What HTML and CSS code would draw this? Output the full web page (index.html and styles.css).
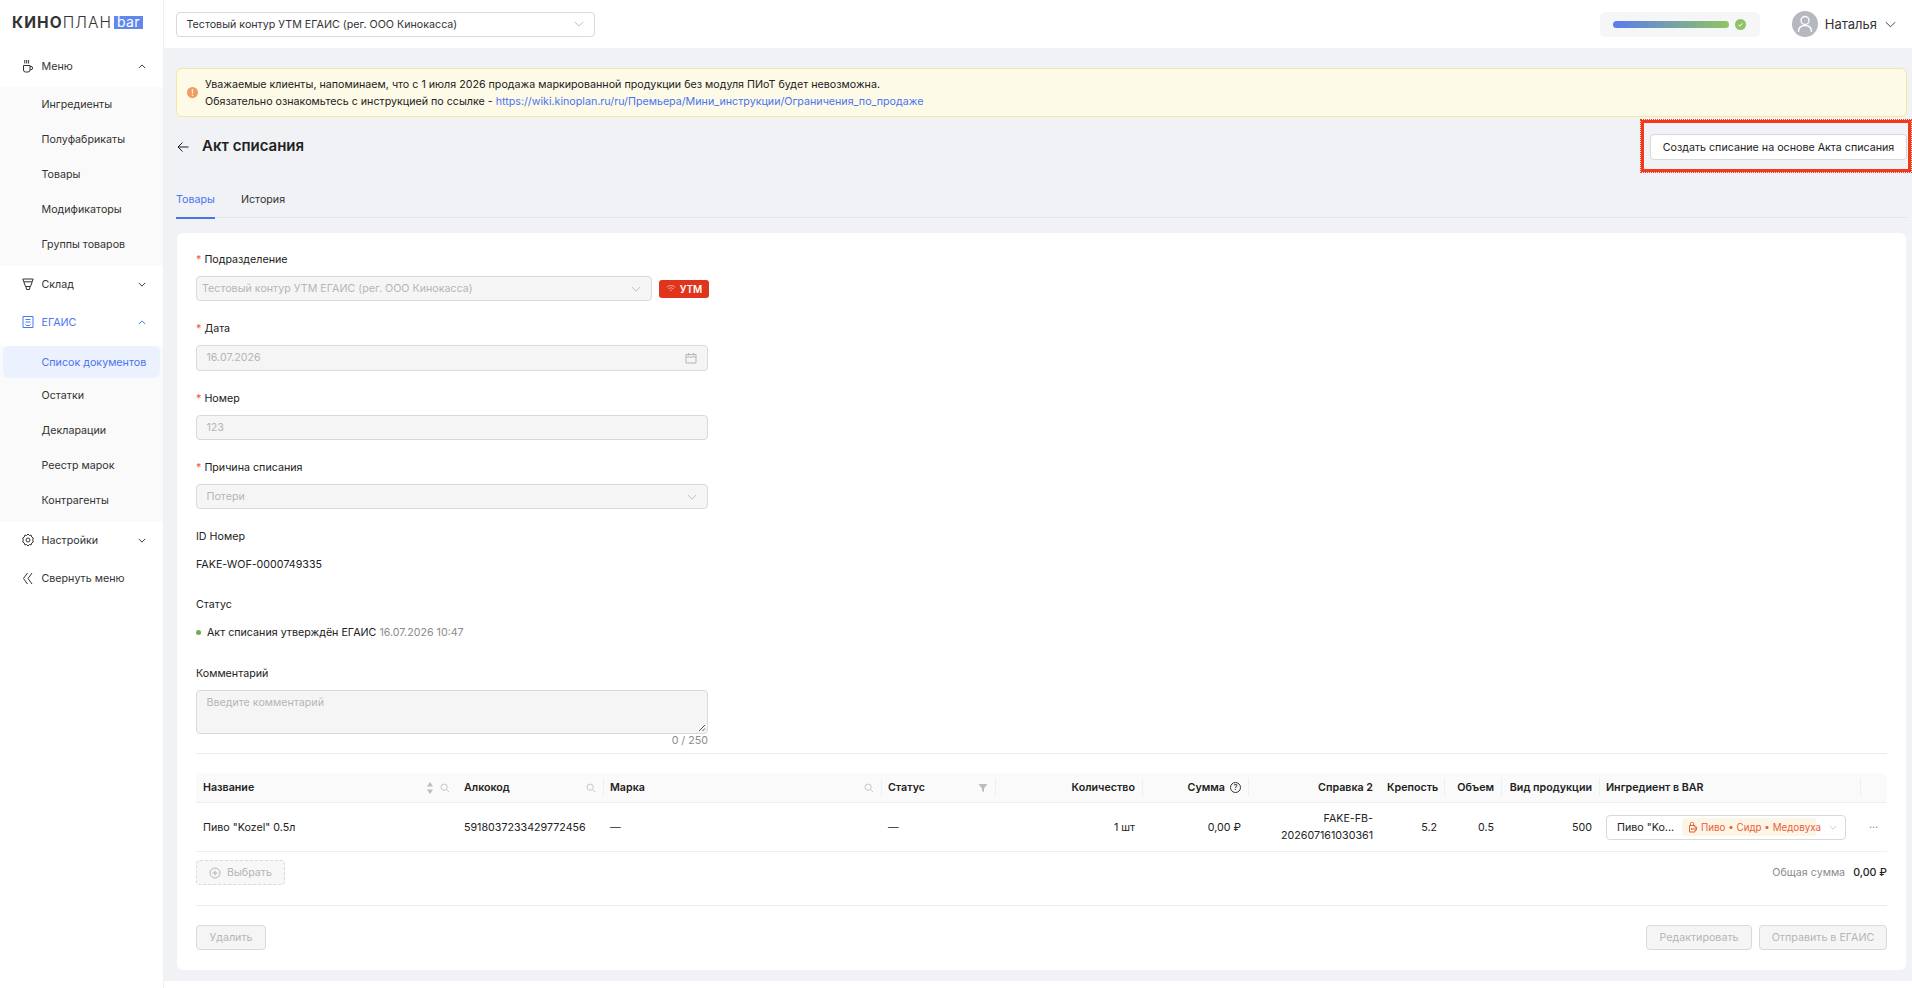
FILE: index.html
```html
<!DOCTYPE html>
<html lang="ru">
<head>
    <meta charset="UTF-8">
    <title>Акт списания</title>
    <link rel="stylesheet" href="styles.css">
</head>
<body>
<div class="app">
    <aside class="sidebar">
        <div class="logo"><span class="logo-bold">КИНО</span><span class="logo-light">ПЛАН</span><span class="logo-bar">bar</span></div>
        <div class="menu-head first">
            <svg class="menu-icon" viewBox="0 0 12 14"><path d="M1.500 6.500h6.500v4.500a2 2 0 0 1-2 2H3.500a2 2 0 0 1-2-2zM8 7.500h1a1.500 1.500 0 0 1 0 3.200H8M2.800 1v3.500M4.700 1v3.500M6.600 1v3.500"/></svg>
            <span class="menu-title">Меню</span>
            <svg class="menu-arrow" viewBox="0 0 10 6"><path d="M1 5l4-4 4 4"/></svg>
        </div>
        <div class="submenu">
            <a>Ингредиенты</a>
            <a>Полуфабрикаты</a>
            <a>Товары</a>
            <a>Модификаторы</a>
            <a>Группы товаров</a>
        </div>
        <div class="menu-head">
            <svg class="menu-icon" viewBox="0 0 12 14"><path d="M.8 2h10.400L8.500 9.500h-5zM2 4.800h8M4 9.500l.5 3h3l.5-3"/></svg>
            <span class="menu-title">Склад</span>
            <svg class="menu-arrow" viewBox="0 0 10 6"><path d="M1 1l4 4 4-4"/></svg>
        </div>
        <div class="menu-head active">
            <svg class="menu-icon" viewBox="0 0 12 14"><path d="M1 1.500h10v11H1zM3.500 4.500h5M3.500 7h5M3.500 9.500l1 1h3l1-1"/></svg>
            <span class="menu-title">ЕГАИС</span>
            <svg class="menu-arrow" viewBox="0 0 10 6"><path d="M1 5l4-4 4 4"/></svg>
        </div>
        <div class="submenu">
            <a class="current">Список документов</a>
            <a>Остатки</a>
            <a>Декларации</a>
            <a>Реестр марок</a>
            <a>Контрагенты</a>
        </div>
        <div class="menu-head">
            <svg class="menu-icon" viewBox="0 0 12 14"><path d="M6 1l1.300 1.400 1.900-.2.500 1.800 1.600 1-.6 2 .6 2-1.600 1-.5 1.800-1.900-.2L6 13l-1.300-1.400-1.900.2-.5-1.800-1.600-1 .6-2-.6-2 1.600-1 .5-1.800 1.900.2z"/><circle cx="6" cy="7" r="2"/></svg>
            <span class="menu-title">Настройки</span>
            <svg class="menu-arrow" viewBox="0 0 10 6"><path d="M1 1l4 4 4-4"/></svg>
        </div>
        <div class="menu-head collapse">
            <svg class="menu-icon" viewBox="0 0 12 14"><path d="M5.500 2L1.500 7.500l4 5.500M10 2L6 7.500l4 5.500"/></svg>
            <span class="menu-title">Свернуть меню</span>
        </div>
    </aside>

    <main class="main">
        <header class="topbar">
            <div class="select top-select">
                <span class="select-text">Тестовый контур УТМ ЕГАИС (рег. ООО Кинокасса)</span>
                <svg class="select-arrow" viewBox="0 0 12 7"><path d="M1 1l5 5 5-5"/></svg>
            </div>
            <div class="status-pill">
                <span class="status-bar"></span>
                <span class="status-dot">
                    <svg viewBox="0 0 11 11"><path d="M3.500 5.800l1.500 1.400 2.500-3"/></svg>
                </span>
            </div>
            <div class="user">
                <span class="avatar">
                    <svg viewBox="0 0 26 26"><circle cx="13" cy="9.500" r="4"/><path d="M6.500 21c0-4.500 2.500-6.500 6.500-6.500s6.500 2 6.500 6.500"/></svg>
                </span>
                <span class="user-name">Наталья</span>
                <svg class="user-arrow" viewBox="0 0 12 7"><path d="M1 1l5 5 5-5"/></svg>
            </div>
        </header>

        <div class="content">
            <div class="notice">
                <span class="notice-icon">!</span>
                <div>
                    <div>Уважаемые клиенты, напоминаем, что с 1 июля 2026 продажа маркированной продукции без модуля ПИоТ будет невозможна.</div>
                    <div>Обязательно ознакомьтесь с инструкцией по ссылке - <a class="link">https://wiki.kinoplan.ru/ru/Премьера/Мини_инструкции/Ограничения_по_продаже</a></div>
                </div>
            </div>

            <div class="page-head">
                <svg class="back" viewBox="0 0 12 12"><path d="M11.500 6H1M5.500 1.500L1 6l4.500 4.500"/></svg>
                <h1>Акт списания</h1>
                <button class="btn create-btn">Создать списание на основе Акта списания</button>
                <span class="red-mark"></span>
            </div>

            <div class="tabs">
                <span class="tab active">Товары</span>
                <span class="tab">История</span>
            </div>

            <section class="card">
                <div class="field">
                    <div class="label req">Подразделение</div>
                    <div class="row-ctl">
                        <div class="select disabled unit-select">
                            <span class="select-text">Тестовый контур УТМ ЕГАИС (рег. ООО Кинокасса)</span>
                            <svg class="select-arrow" viewBox="0 0 12 7"><path d="M1 1l5 5 5-5"/></svg>
                        </div>
                        <span class="utm-badge">
                            <svg viewBox="0 0 12 10"><path d="M1 3.500a7 7 0 0 1 10 0M3 5.500a4.200 4.200 0 0 1 6 0M5 7.500a1.400 1.400 0 0 1 2 0"/></svg>
                            УТМ
                        </span>
                    </div>
                </div>
                <div class="field">
                    <div class="label req">Дата</div>
                    <div class="select disabled wide">
                        <span class="select-text">16.07.2026</span>
                        <svg class="cal" viewBox="0 0 12 12"><path d="M1 2.500h10v8.500H1zM1 5h10M3.500 1v2.500M8.500 1v2.500"/></svg>
                    </div>
                </div>
                <div class="field">
                    <div class="label req">Номер</div>
                    <div class="select disabled wide"><span class="select-text">123</span></div>
                </div>
                <div class="field">
                    <div class="label req">Причина списания</div>
                    <div class="select disabled wide">
                        <span class="select-text">Потери</span>
                        <svg class="select-arrow" viewBox="0 0 12 7"><path d="M1 1l5 5 5-5"/></svg>
                    </div>
                </div>
                <div class="field info">
                    <div class="label">ID Номер</div>
                    <div class="value">FAKE-WOF-0000749335</div>
                </div>
                <div class="field info">
                    <div class="label">Статус</div>
                    <div class="value"><span class="dot"></span>Акт списания утверждён ЕГАИС <span class="muted">16.07.2026 10:47</span></div>
                </div>
                <div class="comment">
                    <div class="label">Комментарий</div>
                    <div class="textarea">Введите комментарий
                        <svg class="grip" viewBox="0 0 8 8"><path d="M1 7l6-6M4.500 7L7 4.500"/></svg>
                    </div>
                    <div class="counter">0 / 250</div>
                </div>
                <hr class="divider">

                <table class="goods">
                    <colgroup>
                        <col class="c-name"><col class="c-code"><col class="c-mark"><col class="c-status"><col class="c-qty"><col class="c-sum"><col class="c-ref"><col class="c-str"><col class="c-vol"><col class="c-kind"><col class="c-ingr"><col>
                    </colgroup>
                    <thead>
                        <tr>
                            <th><div class="th-in">Название
                                <svg class="sort" viewBox="0 0 8 14"><path d="M4 1l3 4.500H1zM4 13l3-4.500H1z"/></svg>
                                <svg class="find" viewBox="0 0 12 12"><circle cx="5" cy="5" r="3.700"/><path d="M8 8l3 3"/></svg>
                            </div></th>
                            <th><div class="th-in">Алкокод
                                <svg class="find auto" viewBox="0 0 12 12"><circle cx="5" cy="5" r="3.700"/><path d="M8 8l3 3"/></svg>
                            </div></th>
                            <th class="sep"><div class="th-in">Марка
                                <svg class="find auto" viewBox="0 0 12 12"><circle cx="5" cy="5" r="3.700"/><path d="M8 8l3 3"/></svg>
                            </div></th>
                            <th class="sep"><div class="th-in">Статус
                                <svg class="funnel" viewBox="0 0 10 10"><path d="M.5 1h9L6 5.500V9L4 8V5.500z"/></svg>
                            </div></th>
                            <th class="num sep">Количество</th>
                            <th class="num sep"><div class="th-in end">Сумма <span class="help">?</span></div></th>
                            <th class="num sep">Справка 2</th>
                            <th class="num">Крепость</th>
                            <th class="num sep">Объем</th>
                            <th class="num sep">Вид продукции</th>
                            <th class="sep">Ингредиент в BAR</th>
                            <th class="sep"></th>
                        </tr>
                    </thead>
                    <tbody>
                        <tr>
                            <td>Пиво "Kozel" 0.5л</td>
                            <td>5918037233429772456</td>
                            <td>—</td>
                            <td>—</td>
                            <td class="num">1 шт</td>
                            <td class="num">0,00 ₽</td>
                            <td class="num ref">FAKE-FB-202607161030361</td>
                            <td class="num">5.2</td>
                            <td class="num">0.5</td>
                            <td class="num">500</td>
                            <td>
                                <div class="select ingr-select">
                                    <span class="ingr-name">Пиво "Ko...</span>
                                    <span class="tag">
                                        <svg viewBox="0 0 10 12"><path d="M1.500 4.500h5.500v6.500H1.500zM7 6h1.500v3H7M2.500 4.500V2.500a1 1 0 0 1 1-1h1a1 1 0 0 1 1 1v2M3.500 7v2M5 7v2"/></svg>
                                        Пиво • Сидр • Медовуха
                                    </span>
                                    <svg class="select-arrow" viewBox="0 0 12 7"><path d="M1 1l5 5 5-5"/></svg>
                                </div>
                            </td>
                            <td class="more">···</td>
                        </tr>
                    </tbody>
                </table>

                <div class="table-foot">
                    <button class="btn pick" disabled>
                        <svg viewBox="0 0 12 12"><circle cx="6" cy="6" r="5"/><path d="M6 3.500v5M3.500 6h5"/></svg>
                        Выбрать
                    </button>
                    <div class="total"><span class="muted">Общая сумма</span> <b>0,00 ₽</b></div>
                </div>
                <hr class="divider second">

                <div class="actions">
                    <button class="btn del-btn" disabled>Удалить</button>
                    <span class="spacer"></span>
                    <button class="btn edit-btn" disabled>Редактировать</button>
                    <button class="btn send-btn" disabled>Отправить в ЕГАИС</button>
                </div>
            </section>
        </div>
    </main>
</div>
</body>
</html>
```

FILE: styles.css
```css
* {
    box-sizing: border-box;
}
html, body {
    margin: 0;
    height: 988px;
    overflow: hidden;
}
body {
    font-family: Inter, "Noto Sans", "Liberation Sans", sans-serif;
    font-size: 10.7px;
    color: #1f1f1f;
    background: #fff;
}
svg {
    fill: none;
    stroke: currentColor;
    stroke-width: 1;
    flex: none;
}
.app {
    display: flex;
    height: 988px;
}

/* sidebar */
.sidebar {
    width: 163px;
    flex: none;
    background: #fff;
}
.logo {
    display: flex;
    align-items: center;
    height: 45px;
    padding-left: 12px;
    font-size: 15.5px;
    letter-spacing: 1.05px;
    color: #333;
}
.logo-bold {
    font-weight: 700;
}
.logo-light {
    font-weight: 300;
}
.logo-bar {
    margin-left: 2px;
    width: 29px;
    height: 13px;
    line-height: 11px;
    background: #5f87ee;
    color: #fff;
    font-size: 14px;
    letter-spacing: .4px;
    text-align: center;
}
.menu-head {
    display: flex;
    align-items: center;
    height: 36px;
    padding: 0 17px 0 22px;
    color: #333;
}
.menu-head.first {
    height: 42px;
}
.menu-head.active {
    height: 40px;
    color: #4a74f0;
}
.menu-head.collapse {
    height: 40px;
}
.menu-icon {
    width: 12px;
    height: 14px;
    margin-right: 7.5px;
}
.menu-title {
    flex: 1;
}
.menu-arrow {
    width: 8px;
    height: 5px;
    stroke-width: 1.2;
}
.submenu {
    background: #fafafa;
    padding: 0 3px 4px;
}
.submenu a {
    display: flex;
    align-items: center;
    height: 35px;
    padding-left: 38.5px;
    border-radius: 6px;
    color: #333;
}
.submenu a.current {
    height: 32px;
    margin-top: 4px;
    background: #ebf2fe;
    color: #4a74f0;
}

/* top bar */
.main {
    flex: 1;
    min-width: 0;
    border-left: 1px solid #f0f0f0;
}
.topbar {
    display: flex;
    align-items: center;
    height: 48px;
    padding: 0 16px 0 12px;
    background: #fff;
}
.select {
    display: flex;
    align-items: center;
    height: 25.33px;
    padding: 0 10px 0 9.5px;
    background: #fff;
    border: 1px solid #d9d9d9;
    border-radius: 4px;
}
.select-text {
    flex: 1;
}
.select-arrow {
    width: 10px;
    height: 6px;
    color: #b5b5b5;
}
.top-select {
    width: 419px;
    height: 25px;
    color: #333;
}
.status-pill {
    display: flex;
    align-items: center;
    width: 160px;
    height: 25px;
    margin-left: auto;
    padding: 0 13px;
    background: #f5f6f8;
    border-radius: 5px;
}
.status-bar {
    width: 116px;
    height: 7px;
    border-radius: 4px;
    background: linear-gradient(90deg, #5b7cf0, #90c463);
}
.status-dot {
    width: 11px;
    height: 11px;
    margin-left: 6px;
    border-radius: 50%;
    background: #8dc267;
    color: #fff;
}
.status-dot svg {
    display: block;
}
.user {
    display: flex;
    align-items: center;
    margin-left: 32px;
}
.avatar {
    width: 26px;
    height: 26px;
    border-radius: 50%;
    background: #b6b8c1;
    color: #fff;
}
.avatar svg {
    display: block;
    stroke-width: 1.300;
}
.user-name {
    margin-left: 7px;
    font-size: 13px;
    color: #333;
}
.user-arrow {
    width: 11px;
    height: 7px;
    margin-left: 8px;
    color: #333;
}

/* content */
.content {
    height: 933px;
    padding: 20px 5px 0 12px;
    background: #f0f2f6;
}
.notice {
    display: flex;
    align-items: center;
    height: 49px;
    padding-left: 10px;
    background: #fdfae8;
    border: 1px solid #f6e79e;
    border-radius: 6px;
    line-height: 17px;
    color: #222;
}
.notice-icon {
    width: 11px;
    height: 11px;
    margin-right: 7px;
    border-radius: 50%;
    background: #ee9d62;
    color: #fff;
    font-size: 9px;
    line-height: 11px;
    text-align: center;
}
.link {
    color: #4a74f0;
}
.page-head {
    position: relative;
    display: flex;
    align-items: center;
    height: 26px;
    margin-top: 17px;
}
.back {
    width: 12px;
    height: 12px;
    margin: 0 13px 0 1px;
}
h1 {
    margin: -4px 0 0;
    font-size: 15px;
    font-weight: 600;
    color: #222;
}
.btn {
    height: 25.33px;
    padding: 0;
    background: #f5f5f5;
    border: 1px solid #d9d9d9;
    border-radius: 4px;
    font: inherit;
    color: #b5b5b5;
}
.create-btn {
    width: 257px;
    height: 26px;
    margin-left: auto;
    background: #fff;
    color: #222;
}
.red-mark {
    position: absolute;
    top: -14px;
    right: -4px;
    width: 270px;
    height: 52px;
    border: 3px solid #f2391a;
    outline: 1px dotted #f2391a;
}
.tabs {
    display: flex;
    gap: 26px;
    height: 41px;
    margin-top: 17px;
    border-bottom: 1px solid #e2e4e8;
}
.tab {
    padding-top: 16px;
    color: #333;
}
.tab.active {
    height: 42px;
    color: #4a74f0;
    border-bottom: 2px solid #4a74f0;
}

/* card */
.card {
    margin: 15px 1px 0;
    height: 737px;
    padding: 17px 19px 0;
    background: #fff;
    border-radius: 6px;
}
.field {
    margin-bottom: 18px;
}
.label {
    height: 20px;
    line-height: 20px;
    margin-bottom: 6px;
    color: #222;
}
.label.req::before {
    content: "* ";
    color: #ee5a30;
}
.row-ctl {
    display: flex;
    align-items: center;
    gap: 7px;
}
.select.unit-select {
    width: 456px;
    padding-left: 5px;
}
.wide {
    width: 512px;
}
.select.disabled {
    background: #f5f5f5;
    color: #b5b5b5;
}
.utm-badge {
    display: flex;
    align-items: center;
    justify-content: center;
    gap: 4px;
    width: 50px;
    height: 18px;
    background: #e0341c;
    border-radius: 3px;
    color: #fff;
    font-size: 10px;
    font-weight: 600;
}
.utm-badge svg {
    width: 10px;
    height: 9px;
    color: #f9b7a8;
}
.cal {
    width: 12px;
    height: 12px;
    color: #b5b5b5;
}
.value {
    height: 24px;
    line-height: 24px;
    color: #222;
}
.dot {
    display: inline-block;
    width: 5px;
    height: 5px;
    margin-right: 6px;
    border-radius: 50%;
    background: #6fae4a;
    vertical-align: 1px;
}
.muted {
    color: #8c8c8c;
}
.field.info + .field.info {
    margin-bottom: 18.700px;
}
.textarea {
    position: relative;
    width: 512px;
    height: 44px;
    margin-top: -10px;
    padding: 5px 9.5px;
    background: #f5f5f5;
    border: 1px solid #d9d9d9;
    border-radius: 4px;
    color: #b5b5b5;
}
.comment .label {
    margin-bottom: 16px;
}
.grip {
    position: absolute;
    right: 1px;
    bottom: 1px;
    width: 8px;
    height: 8px;
    color: #555;
}
.counter {
    width: 512px;
    height: 14px;
    line-height: 14px;
    text-align: right;
    color: #8c8c8c;
}
.divider {
    height: 1px;
    margin: 5px 0 0;
    border: 0;
    background: #ececec;
}

/* goods table */
.goods {
    width: 100%;
    margin-top: 19px;
    border-collapse: separate;
    border-spacing: 0;
    table-layout: fixed;
}
.c-name { width: 261px; }
.c-code { width: 146px; }
.c-mark { width: 278px; }
.c-status { width: 114px; }
.c-qty { width: 147px; }
.c-sum { width: 106px; }
.c-ref { width: 132px; }
.c-str { width: 64px; }
.c-vol { width: 57px; }
.c-kind { width: 98px; }
.c-ingr { width: 261px; }
th {
    position: relative;
    height: 30px;
    padding: 0 7px;
    background: #fafafa;
    border-bottom: 1px solid #efefef;
    font-weight: 600;
    text-align: left;
    white-space: nowrap;
    color: #222;
}
th:first-child {
    border-top-left-radius: 6px;
}
th:last-child {
    border-top-right-radius: 6px;
}
th.sep::before {
    content: "";
    position: absolute;
    left: 0;
    top: 5px;
    bottom: 5px;
    width: 1px;
    background: #efefef;
}
.th-in {
    display: flex;
    align-items: center;
}
.th-in.end {
    justify-content: flex-end;
}
.sort {
    width: 8px;
    height: 14px;
    margin-left: auto;
    fill: #bdbdbd;
    stroke: none;
}
.find {
    width: 10px;
    height: 10px;
    margin-left: 6px;
    color: #bdbdbd;
}
.find.auto,
.funnel {
    margin-left: auto;
}
.funnel {
    width: 10px;
    height: 10px;
    fill: #bdbdbd;
    stroke: none;
}
.help {
    width: 11px;
    height: 11px;
    margin-left: 5px;
    border: 1px solid #333;
    border-radius: 50%;
    font-size: 8px;
    line-height: 9px;
    text-align: center;
    font-weight: 400;
}
td {
    height: 49px;
    padding: 0 7px;
    border-bottom: 1px solid #efefef;
    color: #222;
}
.num {
    text-align: right;
}
.ref {
    line-height: 17px;
}
.select.ingr-select {
    width: 240px;
    height: 25px;
    padding: 0 6px 0 10px;
    color: #222;
}
.ingr-name {
    width: 65px;
    flex: none;
    white-space: nowrap;
}
.tag {
    display: flex;
    align-items: center;
    flex: none;
    gap: 3px;
    width: 134px;
    height: 18px;
    margin-right: 13px;
    padding-left: 6px;
    background: #fdf6e6;
    border-radius: 3px;
    color: #e8603c;
    font-size: 9.8px;
    white-space: nowrap;
}
.tag svg {
    width: 10px;
    height: 12px;
}
.ingr-select .select-arrow {
    width: 8px;
    height: 5px;
}
.more {
    padding: 0;
    text-align: center;
    color: #7d93d8;
}
.table-foot {
    display: flex;
    align-items: center;
    justify-content: space-between;
    margin-top: 8px;
}
.pick {
    display: flex;
    align-items: center;
    gap: 6px;
    width: 89px;
    height: 25px;
    padding: 0 12px;
    border-style: dashed;
    background: #f7f7f7;
}
.pick svg {
    width: 12px;
    height: 12px;
}
.total b {
    margin-left: 5px;
    font-weight: 500;
    color: #222;
}
.divider.second {
    margin-top: 20px;
}
.actions {
    display: flex;
    gap: 7px;
    margin-top: 19px;
}
.actions .btn {
    height: 25px;
}
.del-btn {
    width: 70px;
}
.edit-btn {
    width: 106px;
}
.send-btn {
    width: 128px;
}
.spacer {
    flex: 1;
}
```
